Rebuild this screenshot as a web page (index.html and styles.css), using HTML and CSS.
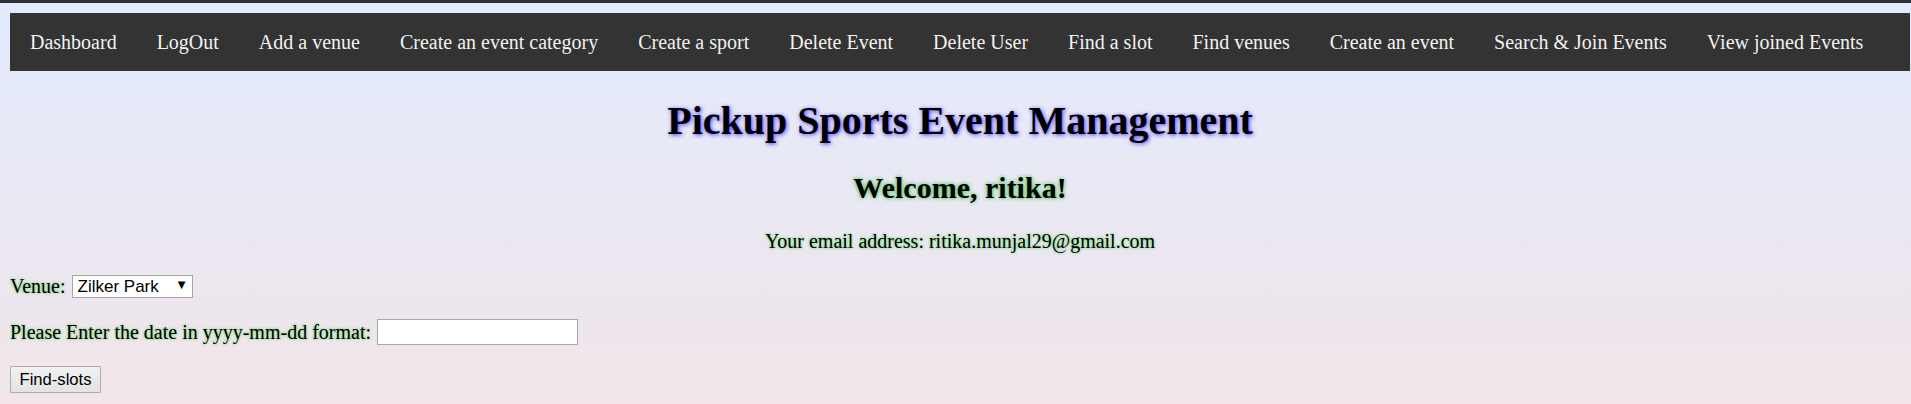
FILE: index.html
```html
<!DOCTYPE html>
<html lang="en">
<head>
<meta charset="utf-8">
<title>Pickup Sports Event Management</title>
<link rel="stylesheet" href="styles.css">
</head>
<body>
<div class="chrome-strip"></div>
<div class="page">
  <nav class="topnav">
    <a href="#">Dashboard</a>
    <a href="#">LogOut</a>
    <a href="#">Add a venue</a>
    <a href="#">Create an event category</a>
    <a href="#">Create a sport</a>
    <a href="#">Delete Event</a>
    <a href="#">Delete User</a>
    <a href="#">Find a slot</a>
    <a href="#">Find venues</a>
    <a href="#">Create an event</a>
    <a href="#">Search &amp; Join Events</a>
    <a href="#">View joined Events</a>
  </nav>
  <h1 class="title">Pickup Sports Event Management</h1>
  <h2 class="welcome">Welcome, ritika!</h2>
  <p class="email">Your email address: ritika.munjal29@gmail.com</p>
  <form class="slot-form">
    <div class="row">
      <label class="glow-label" for="venue">Venue:</label>
      <span class="select-wrap">
        <select id="venue" class="venue-select"><option>Zilker Park</option></select>
        <span class="select-arrow">&#9660;</span>
      </span>
    </div>
    <div class="row row-date">
      <label class="glow-label" for="date">Please Enter the date in yyyy-mm-dd format:</label>
      <input id="date" class="date-input" type="text">
    </div>
    <div class="row row-btn">
      <button type="submit" class="find-btn">Find-slots</button>
    </div>
  </form>
</div>
</body>
</html>
```
FILE: styles.css
```css
html, body {
  margin: 0;
  padding: 0;
  overflow: hidden;
}
body {
  min-height: 404px;
  background: linear-gradient(to bottom, #e1ebfd 0px, #e8e9f6 150px, #ede6ee 300px, #f2e6ea 404px);
  font-family: "Liberation Serif", "Times New Roman", serif;
  font-size: 20px;
  color: #000;
}
.chrome-strip {
  height: 3px;
  background: #2d2f33;
}
.page {
  width: 1900px;
  padding: 10px;
}
.topnav {
  display: flex;
  background: #333333;
}
.topnav a {
  display: block;
  padding: 17.5px 20px;
  line-height: 23px;
  color: #f2f2f2;
  text-decoration: none;
  font-size: 20px;
}
.title {
  margin: 27px 0;
  font-size: 40px;
  line-height: 46px;
  text-align: center;
  font-weight: bold;
  text-shadow: 1px 1px 4px #4a3aff;
}
.welcome {
  margin: 27px 0 25px;
  font-size: 30px;
  line-height: 34px;
  text-align: center;
  font-weight: bold;
  text-shadow: 0 0 4px #22b822;
}
.email {
  margin: 20px 0;
  line-height: 23px;
  text-align: center;
  text-shadow: 0 0 3px #3ecf3e;
}
.slot-form {
  padding-top: 1px;
  display: flex;
  flex-direction: column;
  gap: 21px;
}
.row {
  display: flex;
  align-items: center;
  gap: 6px;
}
.glow-label {
  line-height: 23px;
  text-shadow: 0 0 3px #3ecf3e;
}
.select-wrap {
  position: relative;
  display: inline-block;
}
.venue-select {
  -webkit-appearance: none;
  appearance: none;
  width: 121px;
  height: 23px;
  margin: 0;
  padding: 0 0 0 5px;
  border: 1px solid #a6a6a6;
  border-radius: 0;
  background: #fff;
  font-family: "Liberation Sans", Arial, sans-serif;
  font-size: 17px;
  color: #000;
}
.select-arrow {
  position: absolute;
  right: 7px;
  top: 5px;
  font-family: "DejaVu Sans", sans-serif;
  font-size: 10px;
  line-height: 12px;
  color: #000;
  pointer-events: none;
}
.date-input {
  width: 201px;
  height: 26px;
  margin: 0;
  padding: 0 3px;
  box-sizing: border-box;
  border: 1px solid #a9a9a9;
  background: #fff;
  font-family: "Liberation Sans", Arial, sans-serif;
  font-size: 16.6px;
}
.find-btn {
  height: 27px;
  width: 91px;
  margin: 0;
  padding: 0;
  border: 1px solid #adadad;
  border-radius: 1px;
  background: linear-gradient(to bottom, #f2f2f2, #e3e3e3);
  font-family: "Liberation Sans", Arial, sans-serif;
  font-size: 16.6px;
  color: #000;
}
```
